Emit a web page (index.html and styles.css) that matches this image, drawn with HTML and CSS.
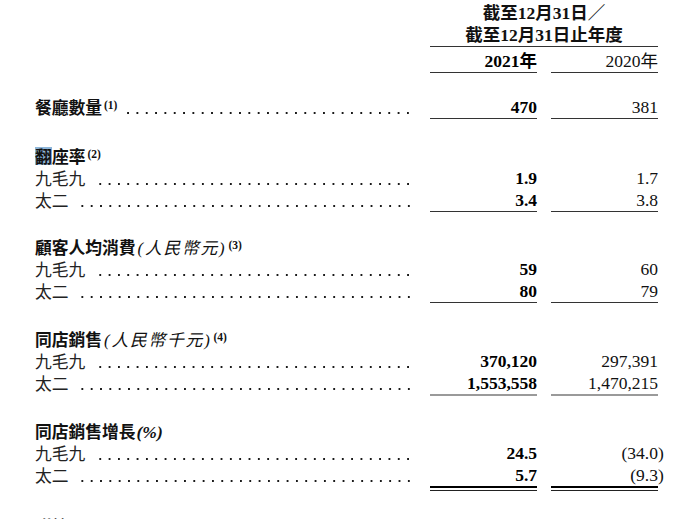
FILE: index.html
```html
<!DOCTYPE html>
<html lang="zh-Hant">
<head>
<meta charset="utf-8">
<link rel="stylesheet" href="styles.css">
</head>
<body>
<div class="page">
  <div class="row head">
    <div class="hdr">截至12月31日／<br>截至12月31日止年度</div>
  </div>
  <div class="row years">
    <div class="v1 b ul">2021年</div>
    <div class="v2 ul">2020年</div>
  </div>

  <div class="row g1">
    <div class="lab"><span class="t h">餐廳數量<sup>(1)</sup></span><span class="dots"></span></div>
    <div class="v1 b ul">470</div>
    <div class="v2 ul">381</div>
  </div>

  <div class="row g2">
    <div class="lab"><span class="t h"><span class="sel">翻</span>座率<sup>(2)</sup></span></div>
  </div>
  <div class="row">
    <div class="lab"><span class="t">九毛九</span><span class="dots"></span></div>
    <div class="v1 b">1.9</div>
    <div class="v2">1.7</div>
  </div>
  <div class="row">
    <div class="lab"><span class="t">太二</span><span class="dots"></span></div>
    <div class="v1 b ul">3.4</div>
    <div class="v2 ul">3.8</div>
  </div>

  <div class="row g3">
    <div class="lab"><span class="t h">顧客人均消費<i>(人民幣元)</i><sup>(3)</sup></span></div>
  </div>
  <div class="row">
    <div class="lab"><span class="t">九毛九</span><span class="dots"></span></div>
    <div class="v1 b">59</div>
    <div class="v2">60</div>
  </div>
  <div class="row">
    <div class="lab"><span class="t">太二</span><span class="dots"></span></div>
    <div class="v1 b ul">80</div>
    <div class="v2 ul">79</div>
  </div>

  <div class="row g4">
    <div class="lab"><span class="t h">同店銷售<i>(人民幣千元)</i><sup>(4)</sup></span></div>
  </div>
  <div class="row">
    <div class="lab"><span class="t">九毛九</span><span class="dots"></span></div>
    <div class="v1 b">370,120</div>
    <div class="v2">297,391</div>
  </div>
  <div class="row">
    <div class="lab"><span class="t">太二</span><span class="dots"></span></div>
    <div class="v1 b ul2">1,553,558</div>
    <div class="v2 ul2">1,470,215</div>
  </div>

  <div class="row g5">
    <div class="lab"><span class="t h">同店銷售增長<i class="pct">(%)</i></span></div>
  </div>
  <div class="row">
    <div class="lab"><span class="t">九毛九</span><span class="dots"></span></div>
    <div class="v1 b">24.5</div>
    <div class="v2">(34.0<span class="rp">)</span></div>
  </div>
  <div class="row">
    <div class="lab"><span class="t">太二</span><span class="dots"></span></div>
    <div class="v1 b thick">5.7</div>
    <div class="v2 thick">(9.3<span class="rp">)</span></div>
  </div>
  <div class="row rule">
    <div class="v1 thin"></div>
    <div class="v2 thin"></div>
  </div>

  <div class="row note">
    <div class="lab"><span class="t h">附註：</span></div>
  </div>
</div>
</body>
</html>
```

FILE: styles.css
```css
html, body {
  margin: 0;
  padding: 0;
  background: #ffffff;
}
body {
  width: 700px;
  height: 519px;
  overflow: hidden;
  color: #111;
  font-family: "Liberation Serif", "Noto Sans CJK TC", serif;
}
.page {
  padding: 2px 0 0 35px;
}
.row {
  display: grid;
  grid-template-columns: 378px 17px 107px 14px 107px;
  line-height: 22px;
}
.lab {
  grid-column: 1;
  display: flex;
  align-items: flex-start;
  height: 22px;
}
.t {
  font-family: "Noto Sans CJK TC", "Liberation Sans", sans-serif;
  font-size: 16.75px;
  color: #222;
  white-space: nowrap;
}
.t.h {
  font-weight: 700;
  color: #111;
}
.t i {
  font-weight: 400;
  font-style: italic;
  font-family: "Liberation Serif", "Noto Sans CJK TC", serif;
  letter-spacing: 1.8px;
  margin-left: 2px;
}
.t i.pct {
  font-weight: 700;
  font-family: "Liberation Serif", serif;
  font-size: 17.5px;
  letter-spacing: 0;
  margin-left: 1px;
}
.t sup {
  font-family: "Liberation Serif", serif;
  font-weight: 700;
  font-size: 11.5px;
  line-height: 0;
  vertical-align: 5px;
  margin-left: 2px;
}
.sel {
  display: inline-block;
  width: 17px;
  height: 18px;
  line-height: 18px;
  vertical-align: top;
  margin-top: 2px;
  background-color: #8eb6d9;
}
.dots {
  flex: 1;
  height: 22px;
  margin-left: 9px;
  background-image: radial-gradient(circle at center, #1a1a1a 0.85px, rgba(0,0,0,0) 1.35px);
  background-size: 9.33px 4px;
  background-repeat: repeat-x;
  background-position: right 0 top 15px;
}
.v1, .v2 {
  text-align: right;
  font-size: 17.5px;
  white-space: nowrap;
  height: 22px;
}
.v1 { grid-column: 3; }
.v2 { grid-column: 5; }
.b { font-weight: 700; color: #000; }
.rp { margin-right: -5.8px; }
.ul { border-bottom: 1px solid #333; }
.ul2 { border-bottom: 2px solid #9a9a9a; }
.thick { border-bottom: 2px solid #000; }
.rule { line-height: 0; }
.rule .thin {
  height: 2px;
  border-bottom: 1px solid #222;
}
.hdr {
  grid-column: 3 / 6;
  text-align: center;
  font-weight: 700;
  font-size: 17.5px;
  height: 44px;
  border-bottom: 1px solid #333;
}
.years { margin-top: 3px; }
.g1 { margin-top: 23px; }
.g2 { margin-top: 26px; }
.g3 { margin-top: 24px; }
.g4 { margin-top: 25px; }
.g5 { margin-top: 24px; }
.note { margin-top: 24px; }
```
